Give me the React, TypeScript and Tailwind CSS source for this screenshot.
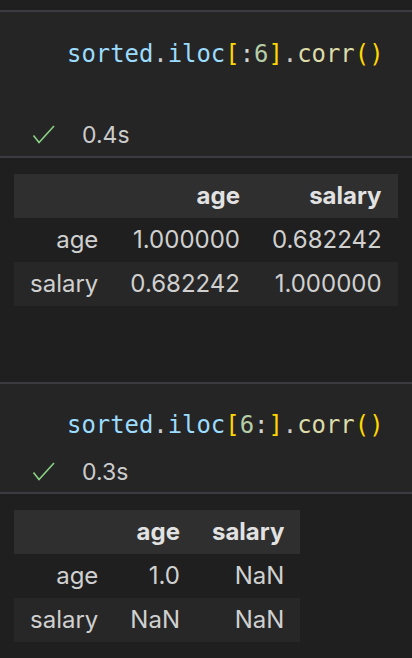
import React from "react";

const mono = { fontFamily: '"DejaVu Sans Mono", monospace' };
const sans = { fontFamily: 'Inter, "Noto Sans", sans-serif' };

function Check() {
  return (
    <svg width="24" height="20" viewBox="0 0 24 20" className="shrink-0">
      <polyline points="1.5,10.5 7,17.5 22,1" fill="none" stroke="#89d185" strokeWidth="1.6" strokeLinejoin="miter" />
    </svg>
  );
}

function Code({ a }: { a: "head" | "tail" }) {
  return (
    <div className="h-[32px] leading-[32px] text-[23.9px] pl-[67px] whitespace-pre" style={mono}>
      <span className="text-[#9cdcfe]">sorted</span>
      <span className="text-[#cccccc]">.</span>
      <span className="text-[#9cdcfe]">iloc</span>
      <span className="text-[#ffd700]">[</span>
      {a === "head" ? (
        <>
          <span className="text-[#d4d4d4]">:</span>
          <span className="text-[#b5cea8]">6</span>
        </>
      ) : (
        <>
          <span className="text-[#b5cea8]">6</span>
          <span className="text-[#d4d4d4]">:</span>
        </>
      )}
      <span className="text-[#ffd700]">]</span>
      <span className="text-[#cccccc]">.</span>
      <span className="text-[#dcdcaa]">corr</span>
      <span className="text-[#ffd700]">()</span>
    </div>
  );
}

function Time({ t }: { t: string }) {
  return (
    <div className="h-[30px] flex items-center pl-[32px] gap-[26px]">
      <Check />
      <span className="text-[23px] text-[#cccccc]" style={sans}>{t}</span>
    </div>
  );
}

function Table({ cols, rows }: { cols: string[]; rows: string[][] }) {
  return (
    <table className="border-collapse text-[24px]" style={sans}>
      <thead>
        <tr className="bg-[#2f2f2f] h-[44px]">
          <th className="px-4"></th>
          {cols.map((c) => (
            <th key={c} className="px-4 text-right font-bold text-[#e2e2e2] whitespace-nowrap">{c}</th>
          ))}
        </tr>
      </thead>
      <tbody>
        {rows.map((r, i) => (
          <tr key={i} className={`h-[44px] ${i % 2 === 1 ? "bg-[#272727]" : ""}`}>
            {r.map((v, j) => (
              <td key={j} className="px-4 text-right text-[#d0d0d0] whitespace-nowrap font-normal">{v}</td>
            ))}
          </tr>
        ))}
      </tbody>
    </table>
  );
}

export default function App() {
  return (
    <div className="w-[412px] h-[658px] overflow-hidden bg-[#1f1f1f] pt-[10px]">
      <div className="border-y-2 border-[#3b3b40] bg-[#252525] pt-[26px] pb-[6px]">
        <Code a="head" />
        <div className="mt-[50px]">
          <Time t="0.4s" />
        </div>
      </div>
      <div className="h-[224px] pt-4 pl-[14px]">
        <Table
          cols={["age", "salary"]}
          rows={[
            ["age", "1.000000", "0.682242"],
            ["salary", "0.682242", "1.000000"],
          ]}
        />
      </div>
      <div className="border-y-2 border-[#3b3b40] bg-[#252525] pt-[25px] pb-[5px]">
        <Code a="tail" />
        <div className="mt-[16px]">
          <Time t="0.3s" />
        </div>
      </div>
      <div className="pt-4 pl-[14px]">
        <Table
          cols={["age", "salary"]}
          rows={[
            ["age", "1.0", "NaN"],
            ["salary", "NaN", "NaN"],
          ]}
        />
      </div>
    </div>
  );
}
